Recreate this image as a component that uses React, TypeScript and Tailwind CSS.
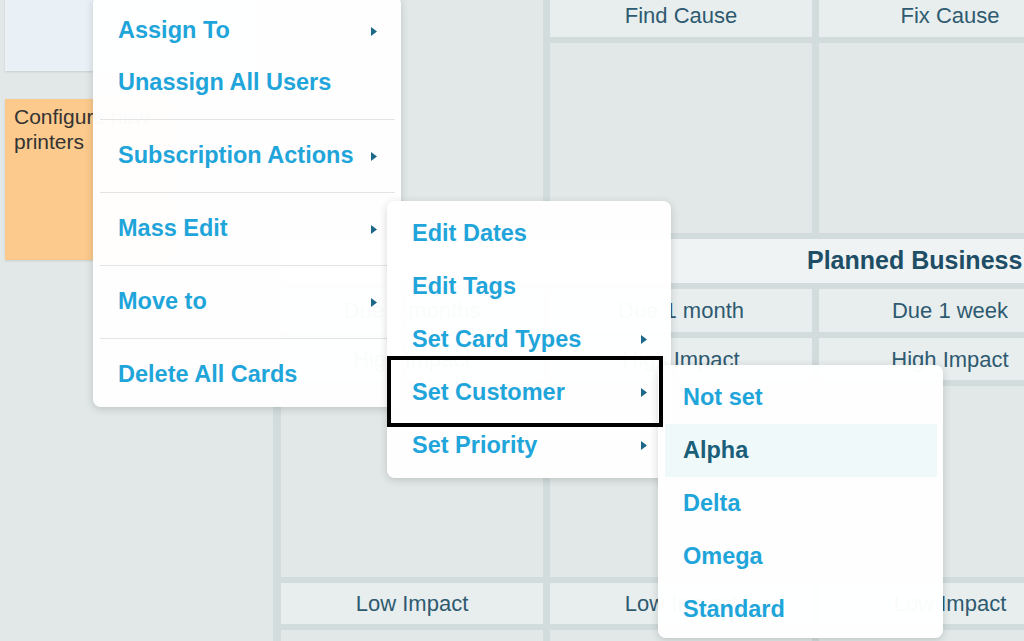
import type { ReactNode } from 'react'

const font = "font-['Liberation_Sans','Helvetica_Neue',Arial,sans-serif]"

function Arrow() {
  return (
    <svg width="6" height="9" viewBox="0 0 6 9" className="shrink-0">
      <polygon points="0,0 6,4.5 0,9" fill="#1d6788" />
    </svg>
  )
}

function MenuItem({
  label,
  sub,
  active,
  h = 'h-[53px]',
}: {
  label: string
  sub?: boolean
  active?: boolean
  h?: string
}) {
  return (
    <div
      className={[
        'mx-[7px] mr-[6px] flex items-center justify-between pl-[18px] pr-[18px] text-[23.5px] font-bold',
        h,
        active ? 'bg-[#f0f9f9] text-[#1b5e79]' : 'text-[#1fa5da]',
      ].join(' ')}
    >
      <span>{label}</span>
      {sub && <Arrow />}
    </div>
  )
}

function Divider() {
  return <div className="ml-[7px] mr-[6px] h-px bg-[#e2e4e5]" />
}

function Cell({
  children,
  className = '',
}: {
  children?: ReactNode
  className?: string
}) {
  return (
    <div
      className={[
        'flex items-center justify-center text-[22px] text-[#2e5a70]',
        className,
      ].join(' ')}
    >
      {children}
    </div>
  )
}

export default function App() {
  return (
    <div
      className={`relative h-[641px] w-[1024px] overflow-hidden bg-[#e2e8e8] ${font}`}
    >
      <div className="flex h-full">
        <aside className="flex w-[273px] shrink-0 flex-col gap-[28px] pl-[5px]">
          <div className="h-[71px] w-[250px] bg-[#e9f1f6] shadow-[0_1px_2px_rgba(0,0,0,0.12)]" />
          <div className="h-[161px] w-[168px] bg-[#fcca8c] px-[9px] pt-[5px] text-[21px] leading-[25px] text-[#333333] shadow-[0_1px_2px_rgba(0,0,0,0.12)]">
            Configure new printers
          </div>
        </aside>

        <div className="flex-1 overflow-hidden bg-[#d2dcdd] pl-[8px]">
          <div className="grid grid-cols-[262px_262px_262px] grid-rows-[37px_190px_44px_43px_42px_191px_41px_40px] gap-x-[7px] gap-y-[6px]">
            <Cell className="row-span-2 bg-[#e2e8e8]" />
            <Cell className="bg-[#e8eeee] pb-[6px]">Find Cause</Cell>
            <Cell className="bg-[#e8eeee] pb-[6px]">Fix Cause</Cell>
            <Cell className="bg-[#e2e8e8]" />
            <Cell className="bg-[#e2e8e8]" />

            <div className="col-span-3 flex items-center overflow-hidden whitespace-nowrap bg-[#eff3f3] pl-[526px] text-[25px] font-bold text-[#1e4d66]">
              Planned Business
            </div>

            <Cell className="bg-[#e8eeee]">Due 3 months</Cell>
            <Cell className="bg-[#e8eeee]">Due 1 month</Cell>
            <Cell className="bg-[#e8eeee]">Due 1 week</Cell>

            <Cell className="bg-[#e8eeee]">High Impact</Cell>
            <Cell className="bg-[#e8eeee]">High Impact</Cell>
            <Cell className="bg-[#e8eeee]">High Impact</Cell>

            <Cell className="bg-[#e2e8e8]" />
            <Cell className="bg-[#e2e8e8]" />
            <Cell className="bg-[#e2e8e8]" />

            <Cell className="bg-[#e8eeee]">Low Impact</Cell>
            <Cell className="bg-[#e8eeee]">Low Impact</Cell>
            <Cell className="bg-[#e8eeee]">Low Impact</Cell>

            <Cell className="bg-[#e2e8e8]" />
            <Cell className="bg-[#e2e8e8]" />
            <Cell className="bg-[#e2e8e8]" />
          </div>
        </div>
      </div>

      {/* main context menu */}
      <div className="absolute left-[93px] top-[-4px] w-[308px] rounded-[8px] bg-white/[0.975] shadow-[0_2px_8px_rgba(0,0,0,0.16)]">
        <div className="pb-[10px] pt-[9px]">
          <MenuItem label="Assign To" sub h="h-[52px]" />
          <MenuItem label="Unassign All Users" h="h-[52px]" />
        </div>
        <Divider />
        <div className="py-[10px]">
          <MenuItem label="Subscription Actions" sub h="h-[52px]" />
        </div>
        <Divider />
        <div className="py-[10px]">
          <MenuItem label="Mass Edit" sub h="h-[52px]" />
        </div>
        <Divider />
        <div className="py-[10px]">
          <MenuItem label="Move to" sub h="h-[52px]" />
        </div>
        <Divider />
        <div className="pb-[6px] pt-[10px]">
          <MenuItem label="Delete All Cards" h="h-[52px]" />
        </div>
      </div>

      {/* mass edit submenu */}
      <div className="absolute left-[387px] top-[201px] w-[284px] rounded-[8px] bg-white/[0.975] py-[6px] shadow-[0_2px_8px_rgba(0,0,0,0.16)]">
        <MenuItem label="Edit Dates" />
        <MenuItem label="Edit Tags" />
        <MenuItem label="Set Card Types" sub />
        <MenuItem label="Set Customer" sub />
        <MenuItem label="Set Priority" sub />
      </div>

      {/* customer submenu */}
      <div className="absolute left-[658px] top-[365px] w-[285px] rounded-[8px] bg-white/[0.975] pb-[2px] pt-[6px] shadow-[0_2px_8px_rgba(0,0,0,0.16)]">
        <MenuItem label="Not set" />
        <MenuItem label="Alpha" active />
        <MenuItem label="Delta" />
        <MenuItem label="Omega" />
        <MenuItem label="Standard" />
      </div>

      {/* annotation box */}
      <div className="pointer-events-none absolute left-[387px] top-[356px] h-[71px] w-[276px] border-[4px] border-black" />
    </div>
  )
}
